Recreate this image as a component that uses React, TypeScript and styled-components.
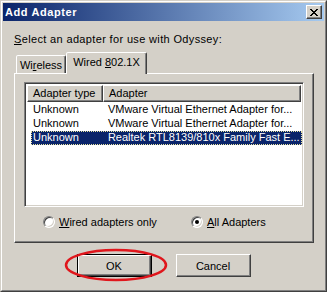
import styled, { createGlobalStyle } from "styled-components";

const GlobalStyle = createGlobalStyle`
  body {
    margin: 0;
    font-family: "Liberation Sans", Arial, sans-serif;
    font-size: 11px;
    color: #000;
  }
`;

const face = "#D4D0C8";
const shadow = "#808080";
const dark = "#404040";

const Window = styled.div`
  width: 327px;
  height: 292px;
  box-sizing: border-box;
  background: ${face};
  border: 1px solid;
  border-color: ${face} ${dark} ${dark} ${face};
`;

const Frame = styled.div`
  height: 100%;
  box-sizing: border-box;
  border: 1px solid;
  border-color: #fff ${shadow} ${shadow} #fff;
  padding: 1px;
  display: flex;
  flex-direction: column;
`;

const TitleBar = styled.div`
  height: 18px;
  display: flex;
  align-items: center;
  justify-content: space-between;
  padding: 0 2px 0 2px;
  background: linear-gradient(to right, #0a246a, #a6caf0);
`;

const Title = styled.span`
  color: #fff;
  font-weight: bold;
  font-size: 11px;
  letter-spacing: 0.6px;
`;

const CloseButton = styled.div`
  width: 16px;
  height: 14px;
  box-sizing: border-box;
  background: ${face};
  border: 1px solid;
  border-color: #fff ${dark} ${dark} #fff;
  box-shadow: inset -1px -1px ${shadow};
  display: flex;
  align-items: center;
  justify-content: center;
`;

const Body = styled.div`
  flex: 1;
  padding: 12px 11px 0 11px;
  display: flex;
  flex-direction: column;
`;

const Label = styled.div`
  line-height: 13px;
  letter-spacing: 0.35px;
`;

const U = styled.span`
  text-decoration: underline;
`;

const TabStrip = styled.div`
  margin-top: 6px;
  height: 21px;
  display: flex;
  align-items: flex-end;
  padding-left: 2px;
  position: relative;
  z-index: 1;
`;

const Tab = styled.div<{ $active?: boolean }>`
  box-sizing: border-box;
  height: ${(p) => (p.$active ? 22 : 18)}px;
  margin-bottom: ${(p) => (p.$active ? -1 : 0)}px;
  padding-top: 3px;
  width: ${(p) => (p.$active ? 81 : 50)}px;
  text-align: center;
  background: ${face};
  border: 1px solid;
  border-bottom: none;
  border-color: #fff ${dark} transparent #fff;
  border-radius: 2px 2px 0 0;
  box-shadow: inset -1px 0 ${shadow};
  line-height: 13px;
`;

const Panel = styled.div`
  width: 300px;
  height: 170px;
  box-sizing: border-box;
  border: 1px solid;
  border-color: #fff ${dark} ${dark} #fff;
  box-shadow: inset -1px -1px ${shadow};
  padding: 8px 9px;
  display: flex;
  flex-direction: column;
`;

const List = styled.div`
  width: 280px;
  height: 125px;
  box-sizing: border-box;
  background: #fff;
  border: 1px solid;
  border-color: ${shadow} #fff #fff ${shadow};
  box-shadow: inset 1px 1px ${dark}, inset -1px -1px ${face};
  padding: 2px;
  display: flex;
  flex-direction: column;
`;

const Header = styled.div`
  display: flex;
  height: 17px;
  width: 274px;
`;

const HeaderCell = styled.div<{ $w: number }>`
  width: ${(p) => p.$w}px;
  box-sizing: border-box;
  background: ${face};
  border: 1px solid;
  border-color: #fff ${dark} ${dark} #fff;
  box-shadow: inset -1px -1px ${shadow};
  padding: 1px 0 0 5px;
  line-height: 13px;
  white-space: nowrap;
  overflow: hidden;
`;

const Rows = styled.div`
  padding-top: 1px;
`;

const Row = styled.div<{ $selected?: boolean }>`
  display: flex;
  height: 14px;
  line-height: 13px;
  margin-left: 4px;
  width: 271px;
  box-sizing: border-box;
  color: ${(p) => (p.$selected ? "#fff" : "#000")};
  background: ${(p) => (p.$selected ? "#0a246a" : "transparent")};
  outline: ${(p) => (p.$selected ? "1px dotted #e8e4a0" : "none")};
  outline-offset: -1px;
`;

const Cell = styled.div<{ $w: number }>`
  width: ${(p) => p.$w}px;
  padding-left: 2px;
  white-space: nowrap;
  overflow: hidden;
`;

const RadioRow = styled.div`
  display: flex;
  align-items: center;
  margin-top: 8px;
  height: 13px;
  padding-left: 19px;
`;

const RadioOption = styled.label<{ $w: number }>`
  display: flex;
  align-items: center;
  gap: 4px;
  width: ${(p) => p.$w}px;
`;

const RadioCircle = styled.span<{ $checked?: boolean }>`
  width: 12px;
  height: 12px;
  box-sizing: border-box;
  border-radius: 50%;
  background: #fff;
  border: 1px solid;
  border-color: ${shadow} #fff #fff ${shadow};
  box-shadow: inset 1px 1px ${dark}, inset -1px -1px ${face};
  display: flex;
  align-items: center;
  justify-content: center;
  &::after {
    content: "";
    width: 4px;
    height: 4px;
    border-radius: 50%;
    background: ${(p) => (p.$checked ? "#000" : "transparent")};
  }
`;

const Buttons = styled.div`
  display: flex;
  justify-content: center;
  gap: 24px;
  margin-top: 11px;
`;

const ButtonWrap = styled.div`
  position: relative;
`;

const Button = styled.div<{ $default?: boolean }>`
  width: 75px;
  height: 23px;
  box-sizing: border-box;
  background: ${face};
  display: flex;
  align-items: center;
  justify-content: center;
  border: 1px solid;
  border-color: ${(p) =>
    p.$default ? "#000" : `#fff ${dark} ${dark} #fff`};
  box-shadow: ${(p) =>
    p.$default
      ? `inset 1px 1px #fff, inset -1px -1px ${dark}, inset -2px -2px ${shadow}`
      : `inset -1px -1px ${shadow}`};
`;

const Annotation = styled.svg`
  position: absolute;
  left: -12px;
  top: -5px;
  overflow: visible;
  pointer-events: none;
`;

const CloseGlyph = () => (
  <svg width="8" height="7" viewBox="0 0 8 7" shapeRendering="crispEdges">
    <path
      d="M0 0h2v1H0zM6 0h2v1H6zM1 1h2v1H1zM5 1h2v1H5zM2 2h4v1H2zM3 3h2v1H3zM2 4h4v1H2zM1 5h2v1H1zM5 5h2v1H5zM0 6h2v1H0zM6 6h2v1H6z"
      fill="#000"
    />
  </svg>
);

const rows = [
  { type: "Unknown", name: "VMware Virtual Ethernet Adapter for..." },
  { type: "Unknown", name: "VMware Virtual Ethernet Adapter for..." },
  { type: "Unknown", name: "Realtek RTL8139/810x Family Fast E...", selected: true },
];

export default function App() {
  return (
    <>
      <GlobalStyle />
      <Window>
        <Frame>
          <TitleBar>
            <Title>Add Adapter</Title>
            <CloseButton>
              <CloseGlyph />
            </CloseButton>
          </TitleBar>
          <Body>
            <Label>
              <U>S</U>elect an adapter for use with Odyssey:
            </Label>
            <TabStrip>
              <Tab>
                Wi<U>r</U>eless
              </Tab>
              <Tab $active>
                Wired <U>8</U>02.1X
              </Tab>
            </TabStrip>
            <Panel>
              <List>
                <Header>
                  <HeaderCell $w={76}>Adapter type</HeaderCell>
                  <HeaderCell $w={198}>Adapter</HeaderCell>
                </Header>
                <Rows>
                  {rows.map((r, i) => (
                    <Row key={i} $selected={r.selected}>
                      <Cell $w={74}>{r.type}</Cell>
                      <Cell $w={197}>{r.name}</Cell>
                    </Row>
                  ))}
                </Rows>
              </List>
              <RadioRow>
                <RadioOption $w={148}>
                  <RadioCircle />
                  <span>
                    <U>W</U>ired adapters only
                  </span>
                </RadioOption>
                <RadioOption $w={110}>
                  <RadioCircle $checked />
                  <span>
                    <U>A</U>ll Adapters
                  </span>
                </RadioOption>
              </RadioRow>
            </Panel>
            <Buttons>
              <ButtonWrap>
                <Button $default>OK</Button>
                <Annotation width="102" height="32">
                  <ellipse
                    cx="51"
                    cy="16"
                    rx="50"
                    ry="15"
                    fill="none"
                    stroke="#e0161c"
                    strokeWidth="2.5"
                  />
                </Annotation>
              </ButtonWrap>
              <Button>Cancel</Button>
            </Buttons>
          </Body>
        </Frame>
      </Window>
    </>
  );
}
